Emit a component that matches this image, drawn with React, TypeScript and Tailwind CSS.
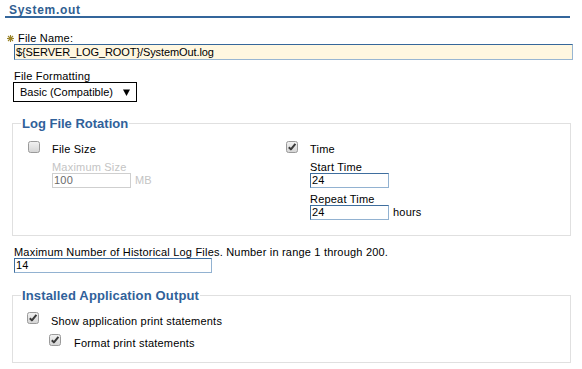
import React from "react";

const Check = ({ checked }: { checked: boolean }) => (
  <svg width="12" height="12" viewBox="0 0 12 12" className="shrink-0 block">
    <defs>
      <linearGradient id={checked ? "gc" : "gu"} x1="0" y1="0" x2="0" y2="1">
        <stop offset="0" stopColor="#f2f2f2" />
        <stop offset="1" stopColor="#d4d4d4" />
      </linearGradient>
    </defs>
    <rect x="0.5" y="0.5" width="11" height="11" rx="2" fill={`url(#${checked ? "gc" : "gu"})`} stroke="#9a9a9a" />
    {checked && (
      <path d="M2.8 6.2 L4.9 8.4 L9.4 2.8" fill="none" stroke="#3a3a3a" strokeWidth="2" strokeLinejoin="round" />
    )}
  </svg>
);

const Label = ({ children, className = "" }: { children: React.ReactNode; className?: string }) => (
  <div className={`h-[11px] leading-[11px] whitespace-nowrap ${className}`}>{children}</div>
);

const TextBox = ({ value, w, disabled = false }: { value: string; w: string; disabled?: boolean }) => (
  <div
    className={`${w} h-[15px] border flex items-center pl-[1px] leading-[11px] ${
      disabled
        ? "border-[#cfcfcf] text-[#6a6a6a]"
        : "border-[#3f6e9e] border-b-[#92b2d1] border-r-[#92b2d1] text-black"
    }`}
  >
    {value}
  </div>
);

export default function App() {
  return (
    <div className="w-[582px] h-[369px] bg-white text-black text-[11px] tracking-[0.2px] font-['Liberation_Sans',Arial,sans-serif] overflow-hidden">
      {/* Header */}
      <div className="pt-[4px] mx-[5px]">
        <div className="pl-[4px] text-[12px] leading-[12px] font-bold tracking-[0.7px] text-[#2f5e91]">System.out</div>
        <div className="mt-0 h-[2px] w-[565px] bg-[#34669b]" />
      </div>

      {/* File name */}
      <div className="mt-[15px] flex items-center pl-[7px]">
        <svg width="7" height="7" viewBox="0 0 7 7" className="block">
          <g stroke="#9a8428" strokeWidth="1.1">
            <line x1="3.5" y1="0" x2="3.5" y2="7" />
            <line x1="0" y1="3.5" x2="7" y2="3.5" />
            <line x1="1" y1="1" x2="6" y2="6" />
            <line x1="6" y1="1" x2="1" y2="6" />
          </g>
        </svg>
        <Label className="ml-[4px]">File Name:</Label>
      </div>
      <div className="ml-[14px] w-[559px] h-[16px] bg-[#fff7e0] border border-[#36679a] border-b-[#98b6d2] border-r-[#98b6d2] flex items-center pl-[1px] leading-[11px] tracking-[-0.1px]">
        ${"{"}SERVER_LOG_ROOT{"}"}/SystemOut.log
      </div>

      {/* File formatting */}
      <Label className="mt-[11px] ml-[14px]">File Formatting</Label>
      <div className="ml-[13px] w-[124px] h-[20px] border border-black flex items-center pl-[6px] pr-[6px]">
        <span className="leading-[11px] tracking-normal">Basic (Compatible)</span>
        <svg width="7" height="7" viewBox="0 0 7 7" className="ml-auto block">
          <path d="M0 0.5 L7 0.5 L3.5 7 Z" fill="#000" />
        </svg>
      </div>

      {/* Log File Rotation */}
      <fieldset className="mt-[15px] ml-[12px] w-[559px] border border-[#e0e0e0]">
        <legend className="ml-[8px] px-[1px] text-[13px] leading-[13px] font-bold tracking-[0px] text-[#30619a]">Log File Rotation</legend>
        <div className="flex pt-[11px] pb-[15px] pl-[15px]">
          <div className="w-[258px] flex">
            <Check checked={false} />
            <div className="ml-[12px] pt-[3px]">
              <Label>File Size</Label>
              <Label className="mt-[7px] text-[#c4c4c4]">Maximum Size</Label>
              <div className="flex items-center">
                <TextBox value="100" w="w-[79px]" disabled />
                <span className="ml-[4px] leading-[11px] text-[#c4c4c4]">MB</span>
              </div>
            </div>
          </div>
          <div className="flex">
            <Check checked={true} />
            <div className="ml-[12px] pt-[3px]">
              <Label>Time</Label>
              <Label className="mt-[7px]">Start Time</Label>
              <TextBox value="24" w="w-[79px]" />
              <Label className="mt-[6px]">Repeat Time</Label>
              <div className="flex items-center">
                <TextBox value="24" w="w-[79px]" />
                <span className="ml-[4px] leading-[11px]">hours</span>
              </div>
            </div>
          </div>
        </div>
      </fieldset>

      {/* Historical log files */}
      <Label className="mt-[11px] ml-[14px]">
        Maximum Number of Historical Log Files. Number in range 1 through 200.
      </Label>
      <div className="ml-[14px]">
        <TextBox value="14" w="w-[198px]" />
      </div>

      {/* Installed Application Output */}
      <fieldset className="mt-[16px] ml-[12px] w-[559px] border border-[#e0e0e0]">
        <legend className="ml-[8px] px-[1px] text-[13px] leading-[13px] font-bold tracking-[0.15px] text-[#30619a]">
          Installed Application Output
        </legend>
        <div className="pt-[10px] pb-[13px] pl-[14px]">
          <div className="flex">
            <Check checked={true} />
            <Label className="ml-[12px] mt-[4px]">Show application print statements</Label>
          </div>
          <div className="flex mt-[7px] ml-[22px]">
            <Check checked={true} />
            <Label className="ml-[13px] mt-[4px]">Format print statements</Label>
          </div>
        </div>
      </fieldset>
    </div>
  );
}
